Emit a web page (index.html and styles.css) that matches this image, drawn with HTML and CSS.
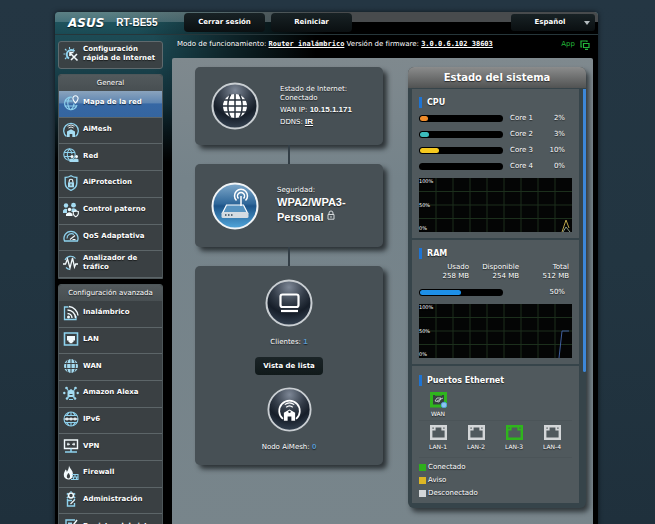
FILE: index.html
```html
<!DOCTYPE html>
<html lang="es">
<head>
<meta charset="utf-8">
<meta name="viewport" content="width=device-width, initial-scale=1">
<title>ASUS RT-BE55 - Mapa de la red</title>
<link rel="stylesheet" href="styles.css">
</head>
<body>
<div class="shell">
  <header class="topbar">
    <div class="brand"><span class="logo">ASUS</span><span class="model">RT-BE55</span></div>
    <button class="top-btn" type="button">Cerrar sesión</button>
    <button class="top-btn" type="button">Reiniciar</button>
    <div class="lang">
      <select class="lang-select" aria-label="Idioma"><option>Español</option><option>English</option></select>
    </div>
  </header>

  <div class="body">
    <nav class="nav" aria-label="Menú principal">
      <a class="quick item" href="#">
        <svg class="ico" viewBox="0 0 16 16"><path d="M11.5 5.2A4.6 4.6 0 1 0 6 12.5" stroke-width="2"/><path d="M6.5 1v2M2 3l1.500 1.500M.5 8h2M2 13l1.500-1.500M11 2.500l-1 1.500"/><path class="w" d="M7 7l7.500 7.500M8 14l6-6M7 10V6.500h3.500" stroke-width="1.600"/></svg>
        <span>Configuración<br>rápida de Internet</span>
      </a>

      <section class="group">
        <h2 class="group-title">General</h2>
        <div class="list list-general">
          <a class="item active" href="#"><svg class="ico" viewBox="0 0 16 16"><path d="M9 2.200A6.300 6.300 0 1 0 14 10M1.500 6h8M1.500 11h11.500M7 2c-3 3.500-3 9 0 12.500M8 14.500c2-1.500 3-4 3-6"/><path class="w" d="M12.500.8a2.600 2.600 0 0 1 2.600 2.700c0 1.800-2.600 4.500-2.600 4.500S9.900 5.300 9.900 3.500A2.600 2.600 0 0 1 12.500.8z"/></svg><span>Mapa de la red</span></a>
          <a class="item" href="#"><svg class="ico" viewBox="0 0 16 16"><path d="M3.500 14.500a7.300 7.300 0 1 1 9 0" stroke-width="1.300"/><path class="f" d="M4 9.500l4-2.200 4 2.200V15H9.300v-3H6.700v3H4z"/><path class="w" d="M5.500 6a4 4 0 0 1 5 0M4.500 4.200a6 6 0 0 1 7 0" stroke-width=".9"/></svg><span>AiMesh</span></a>
          <a class="item" href="#"><svg class="ico" viewBox="0 0 16 16"><circle cx="6.500" cy="6.500" r="5.700"/><path d="M1 4.500h11M1 8.500h8M6.500.8c-3 3-3 8.500 0 11.400M6.500.8c2 2 2.500 4 2.500 5.500"/><circle class="wf" cx="9" cy="8.500" r="1.500"/><circle class="wf" cx="13.500" cy="8.500" r="1.500"/><path class="f" d="M6.500 14v-2.500q2.500-2 4 0 2.500-2 5 0V14z"/></svg><span>Red</span></a>
          <a class="item" href="#"><svg class="ico" viewBox="0 0 16 16"><path d="M8 .8c2 1.400 4 1.700 5.800 1.700V8c0 3.500-2.500 6-5.800 7.300C4.700 14 2.200 11.500 2.200 8V2.500C4 2.500 6 2.200 8 .8z" stroke-width="1.400"/><path class="w" d="M6.200 7.500V6a1.800 1.800 0 0 1 3.600 0v1.500"/><path class="f" d="M5 7.300h6v5H5z"/><path d="M8 8.800v2" stroke="#3a4043"/></svg><span>AiProtection</span></a>
          <a class="item" href="#"><svg class="ico" viewBox="0 0 16 16"><circle class="f" cx="3" cy="3.500" r="2.200"/><circle class="f" cx="10.500" cy="3.200" r="2.400"/><circle class="wf" cx="6.500" cy="7.500" r="1.700"/><path class="f" d="M0 11V8.500Q1.500 6 4 7v4zM8.500 10V6.800q3-1.500 5 1V10z"/><path class="wf" d="M3 14v-2q3.500-3.500 6.500 0v2z"/><path class="w" d="M10.300 9.500q1.500 0 2.500-.9 1 .9 2.500.9v2.300q-.5 2-2.500 3-2-1-2.500-3z"/></svg><span>Control paterno</span></a>
          <a class="item" href="#"><svg class="ico" viewBox="0 0 16 16"><path d="M1.500 13a7 7 0 1 1 13 0z" stroke-width="1.300"/><path d="M4 10.500a4.500 4.500 0 0 1 7-4"/><path class="w" d="M7 11.500l5-4M9.500 11.500h3"/></svg><span>QoS Adaptativa</span></a>
          <a class="item" href="#"><svg class="ico" viewBox="0 0 16 16"><path d="M2 5a6.300 6.300 0 0 1 10.500-1.500M3 12.500a6.500 6.500 0 0 0 4 2"/><path class="w" d="M0 9h2.500L4.500 4l2.500 9L9.500 3l2 9 1.200-3H15" stroke-width="1.300"/></svg><span>Analizador de<br>tráfico</span></a>
        </div>
      </section>

      <section class="group">
        <h2 class="group-title">Configuración avanzada</h2>
        <div class="list list-advanced">
          <a class="item" href="#"><svg class="ico" viewBox="0 0 16 16"><path d="M5.500 2H1.500v12.500H13V11" stroke-width="1.300"/><path class="w" d="M4.500 8.500a4.500 4.500 0 0 1 4.500 4.500M4.500 5a8 8 0 0 1 8 8M6 1.500a10 10 0 0 1 9 9" stroke-width="1.400"/><circle class="wf" cx="5.500" cy="12" r="1.500"/></svg><span>Inalámbrico</span></a>
          <a class="item" href="#"><svg class="ico" viewBox="0 0 16 16"><path d="M1.500 2h13v12h-13z" stroke-width="1.600"/><path class="wf" d="M4 5h8v4.500h-1.500V11h-1v1.200h-3V11h-1V9.500H4z"/></svg><span>LAN</span></a>
          <a class="item" href="#"><svg class="ico" viewBox="0 0 16 16"><circle class="f" cx="8" cy="8" r="7"/><path class="k" d="M1 5.500h14M1 10.500h14M8 1v14M5.500 1c-2.500 4-2.500 10 0 14M10.500 1c2.500 4 2.500 10 0 14"/></svg><span>WAN</span></a>
          <a class="item" href="#"><svg class="ico" viewBox="0 0 16 16"><path class="f" d="M4.500 6.500L8 4l3.500 2.500V12h-7z"/><path class="k" d="M6.500 9.500h3"/><g class="f"><circle cx="1.300" cy="8" r="1.200"/><circle cx="14.700" cy="8" r="1.200"/><circle cx="3.500" cy="3" r="1.300"/><circle cx="12.500" cy="3" r="1.300"/><circle cx="4" cy="13.500" r="1.300"/><circle cx="12" cy="13.500" r="1.300"/></g><path d="M3.500 3l2 3M12.500 3l-2 3M4 13.500l2-2M12 13.500l-2-2M6 14.500h4"/></svg><span>Amazon Alexa</span></a>
          <a class="item" href="#"><svg class="ico" viewBox="0 0 16 16"><circle cx="8" cy="8" r="7"/><path d="M2 4.500h12M2 11.500h12M6 1.500q-2 2-2 3M10 1.500q2 2 2 3M4 11.500q1 2 2 3M12 11.500q-1 2-2 3M8 1v3.500M8 11.500V15"/><path class="w" d="M1.500 8h13M4 6.500v3M8 6.500v3M12 6.500v3" stroke-width="1.300"/></svg><span>IPv6</span></a>
          <a class="item" href="#"><svg class="ico" viewBox="0 0 16 16"><path class="w" d="M1.500 2h13v8.500h-13z" stroke-width="1.400"/><path class="w" d="M4 6.200h3M9 6.200h3M5 4.800v2.800M11 4.800v2.800"/><path d="M8 10.500v3M2 14h12" stroke-width="1.500"/></svg><span>VPN</span></a>
          <a class="item" href="#"><svg class="ico" viewBox="0 0 16 16"><path class="wf" d="M6 .5c.5 3 4 4.500 4 9 0 3-2 5-4.800 5S.8 12.500.8 9.800C.8 7.500 2 6.500 2.500 4.500c1 .5 1.300 1.500 1.300 2.500C5.200 5 6 3 6 .5z"/><path fill="#3a4043" stroke="none" d="M5.500 8c2 2 2 5 0 5.500-2.500-.5-2-3.500 0-5.500z"/><path d="M9 9.500h6v5H8M9 12h6M12 9.500V12M10.500 12v2.500M13.500 12v2.500"/></svg><span>Firewall</span></a>
          <a class="item" href="#"><svg class="ico" viewBox="0 0 16 16"><circle class="w" cx="8" cy="4.500" r="2.500" stroke-width="1.600"/><path d="M8 .2v1.500M3.800 2.500l1.400.8M3.800 6.800l1.400-.8M12.200 2.500l-1.400.8M12.200 6.800l-1.400-.8" stroke-width="1.500"/><path d="M9 9.500H4.500v5.500h7V12M5 9l-1-1M11 9l1-1" stroke-width="1.400"/><path class="w" d="M7.500 13l4-4"/></svg><span>Administración</span></a>
          <a class="item" href="#"><svg class="ico" viewBox="0 0 16 16"><path d="M12 2H3v12.500h10V8" stroke-width="1.400"/><path class="f" d="M5 4.500h4v7H5z"/><path class="w" d="M8 10l6-8" stroke-width="1.500"/></svg><span>Registro del sistema</span></a>
        </div>
      </section>
    </nav>

    <div class="page">
      <div class="info">
        <span>Modo de funcionamiento: <a class="mono" href="#">Router inalámbrico</a> Versión de firmware: <a class="mono" href="#">3.0.0.6.102_38603</a></span>
        <a class="app" href="#">App <svg class="app-ico" viewBox="0 0 10 10"><path d="M2 7H1V1h6v1M3.500 3.500h5.500v4H3.500zM5 9.300h3"/></svg></a>
      </div>

      <main class="content">
        <div class="map">
          <section class="card card-net">
            <svg class="round" viewBox="0 0 48 48">
              <defs>
                <radialGradient id="dark" cx=".5" cy=".15" r=".9"><stop offset="0" stop-color="#7d8796"/><stop offset=".4" stop-color="#343d49"/><stop offset=".65" stop-color="#161e29"/><stop offset="1" stop-color="#3a4858"/></radialGradient>
                <linearGradient id="blue" x1="0" y1="0" x2="0" y2="1"><stop offset="0" stop-color="#7fa9cb"/><stop offset=".45" stop-color="#2f6799"/><stop offset=".5" stop-color="#1d5488"/><stop offset="1" stop-color="#52a7dc"/></linearGradient>
              </defs>
              <circle cx="24" cy="24" r="22.500" fill="url(#dark)" stroke="#c9ced2" stroke-width="2"/>
              <circle cx="24" cy="24" r="12" fill="#fff"/>
              <path d="M13 18h22M12 24h24M13 30h22M24 12v24M19.500 12.500c-3.500 6-3.500 17 0 23M28.500 12.500c3.500 6 3.500 17 0 23" fill="none" stroke="#29323d" stroke-width="1.500"/>
            </svg>
            <div class="net-text">
              <div>Estado de Internet:<br>Conectado</div>
              <div>WAN IP: <b class="arial">10.15.1.171</b></div>
              <div>DDNS: <a class="arial ddns" href="#">IR</a></div>
            </div>
          </section>
          <div class="link"></div>
          <section class="card card-sec">
            <svg class="round" viewBox="0 0 48 48">
              <circle cx="24" cy="24" r="22.500" fill="url(#blue)" stroke="#f1f4f6" stroke-width="2"/>
              <path d="M15.500 23h17l4 8h-25z" fill="#5793c0" stroke="#fff" stroke-width="1.200"/>
              <rect x="10.500" y="30" width="27" height="6" rx="1.500" fill="#d5dce2"/>
              <path d="M14 33h1.500M17 33h1.500M20 33h1.500" stroke="#34485a" stroke-width="1.500"/>
              <path d="M30 24V14M27.500 16.500a3.500 3.500 0 1 1 5 0M25.500 18.500a6.500 6.500 0 1 1 9 0" fill="none" stroke="#fff" stroke-width="1.500"/>
            </svg>
            <div class="sec-text">
              <div>Seguridad:</div>
              <div class="sec-value">WPA2/WPA3-<br>Personal <svg class="lock" viewBox="0 0 8 10"><path d="M2 4.500V3a2 2 0 0 1 4 0v1.500M1 4.500h6v4.700H1zM4 6v1.800" fill="none" stroke="#d5d9dc"/></svg></div>
            </div>
          </section>
          <div class="link"></div>
          <section class="card card-clients">
            <svg class="round" viewBox="0 0 48 48">
              <circle cx="24" cy="24" r="22.500" fill="url(#dark)" stroke="#c9ced2" stroke-width="2"/>
              <rect x="15.500" y="15.500" width="18" height="12.500" rx="2" fill="none" stroke="#fff" stroke-width="2.200"/>
              <path d="M16 32h17" stroke="#fff" stroke-width="2.200"/>
            </svg>
            <p class="count">Clientes: <b class="num">1</b></p>
            <button class="list-btn" type="button">Vista de lista</button>
            <svg class="round round-small" viewBox="0 0 48 48">
              <circle cx="24" cy="24" r="22.500" fill="url(#dark)" stroke="#c9ced2" stroke-width="2"/>
              <path d="M17 34a11 11 0 1 1 14 0" fill="none" stroke="#fff" stroke-width="1.800"/>
              <path d="M18 27.500l6-3.500 6 3.500V36h-4v-4.500h-4V36h-4z" fill="#fff"/>
              <path d="M20.500 21.500a5.500 5.500 0 0 1 7 0M19 18.800a8.500 8.500 0 0 1 10 0" fill="none" stroke="#fff" stroke-width="1.300"/>
              <circle cx="24" cy="26.500" r="1.300" fill="#29323d"/>
            </svg>
            <p class="count">Nodo AiMesh: <b class="num">0</b></p>
          </section>
        </div>

        <aside class="status">
          <h1 class="status-title">Estado del sistema</h1>
          <div class="status-body">
            <div class="panels">
              <section class="panel">
                <h3 class="panel-title">CPU</h3>
                <div class="row"><div class="bar"><div class="fill orange" style="width:10%"></div></div><span>Core 1</span><span class="pct">2%</span></div>
                <div class="row"><div class="bar"><div class="fill teal" style="width:11%"></div></div><span>Core 2</span><span class="pct">3%</span></div>
                <div class="row"><div class="bar"><div class="fill yellow" style="width:23%"></div></div><span>Core 3</span><span class="pct">10%</span></div>
                <div class="row"><div class="bar"></div><span>Core 4</span><span class="pct">0%</span></div>
                <div class="chart">
                  <svg class="plot" viewBox="0 0 153 54" preserveAspectRatio="none"><path class="grid-line" d="M17 0v54M34 0v54M51 0v54M68 0v54M85 0v54M102 0v54M119 0v54M136 0v54M0 13.500h153M0 27h153M0 40.500h153"/><path d="M143 54l4-12 3 8" stroke="#b9a24a"/><path d="M144 54l3-5 4 5" stroke="#8a9a86"/></svg>
                  <div class="labels"><span>100%</span><span>50%</span><span>0%</span></div>
                </div>
              </section>
              <section class="panel">
                <h3 class="panel-title">RAM</h3>
                <dl class="mem">
                  <div><dt>Usado</dt><dd>258 MB</dd></div>
                  <div><dt>Disponible</dt><dd>254 MB</dd></div>
                  <div><dt>Total</dt><dd>512 MB</dd></div>
                </dl>
                <div class="row row-ram"><div class="bar"><div class="fill blue" style="width:50%"></div></div><span></span><span class="pct">50%</span></div>
                <div class="chart">
                  <svg class="plot" viewBox="0 0 153 54" preserveAspectRatio="none"><path class="grid-line" d="M17 0v54M34 0v54M51 0v54M68 0v54M85 0v54M102 0v54M119 0v54M136 0v54M0 13.500h153M0 27h153M0 40.500h153"/><path d="M140 54l3-27h7" stroke="#3f5f9e"/></svg>
                  <div class="labels"><span>100%</span><span>50%</span><span>0%</span></div>
                </div>
              </section>
              <section class="panel panel-ports">
                <h3 class="panel-title">Puertos Ethernet</h3>
                <div class="ports ports-wan">
                  <div class="port on"><svg class="port-ico" viewBox="0 0 17 16"><path d="M1.500 1.500h14v12.500h-14z" stroke-width="3" fill="#35423e"/><path d="M5 3h7" stroke-width="1.500"/><path d="M5 9l2-3h4l-2 4zM7 9l6-3" stroke="#d8dddf" stroke-width=".8"/><circle cx="14" cy="13" r="2.800" fill="#8bc4f2" stroke="#4f9be0" stroke-width=".8"/></svg><span>WAN</span></div>
                </div>
                <div class="ports">
                  <div class="port"><svg class="port-ico" viewBox="0 0 17 16"><path d="M1.200 1.200h14.600v12.600H1.200z" stroke-width="2.400"/><path d="M2 4.700h2.700V2M15 4.700h-2.700V2" stroke-width="1.800"/></svg><span>LAN-1</span></div>
                  <div class="port"><svg class="port-ico" viewBox="0 0 17 16"><path d="M1.200 1.200h14.600v12.600H1.200z" stroke-width="2.400"/><path d="M2 4.700h2.700V2M15 4.700h-2.700V2" stroke-width="1.800"/></svg><span>LAN-2</span></div>
                  <div class="port on"><svg class="port-ico" viewBox="0 0 17 16"><path d="M1.200 1.200h14.600v12.600H1.200z" stroke-width="2.400"/><path d="M2 4.700h2.700V2M15 4.700h-2.700V2" stroke-width="1.800"/></svg><span>LAN-3</span></div>
                  <div class="port"><svg class="port-ico" viewBox="0 0 17 16"><path d="M1.200 1.200h14.600v12.600H1.200z" stroke-width="2.400"/><path d="M2 4.700h2.700V2M15 4.700h-2.700V2" stroke-width="1.800"/></svg><span>LAN-4</span></div>
                </div>
                <ul class="legend">
                  <li><i class="dot green"></i>Conectado</li>
                  <li><i class="dot amber"></i>Aviso</li>
                  <li><i class="dot gray"></i>Desconectado</li>
                </ul>
              </section>
            </div>
            <div class="scroll"><div class="thumb"></div></div>
          </div>
        </aside>
      </main>
    </div>
  </div>
</div>
</body>
</html>
```

FILE: styles.css
```css
* { box-sizing: border-box; }

body {
  margin: 0;
  height: 100vh;
  overflow: hidden;
  padding: 12px 57px 0 55px;
  background: linear-gradient(#243643 0, #223541 50%, #1f303c 100%);
  color: #fff;
  font: 7px/9px "DejaVu Sans", Verdana, sans-serif;
  text-shadow: 0 1px 1px rgba(0, 0, 0, .6);
}

a { color: inherit; text-decoration: none; }
h1, h2, h3, p, dl, dd, ul { margin: 0; padding: 0; }
button, select { font: inherit; color: inherit; text-shadow: inherit; border: 0; margin: 0; padding: 0; }

.shell {
  border-radius: 4px 4px 0 0;
  background:
    linear-gradient(90deg, rgba(0, 0, 0, 0) 18%, rgba(0, 0, 0, .5) 32%, #000 48%) 0 22px / 100% 100% no-repeat,
    linear-gradient(#1f515b 0, #1a444e 50px, #123039 90px, #08161b 120px, #000 150px);
  box-shadow: 0 0 5px rgba(0, 0, 0, .6);
  min-height: 100%;
}

/* Top bar */
.topbar {
  display: flex;
  align-items: center;
  height: 23px;
  padding: 0 3px 1px 13px;
  border-bottom: 1px solid #26363a;
  border-radius: 4px 4px 0 0;
  background:
    linear-gradient(90deg, rgba(0, 0, 0, 0) 15%, #000 50%) 0 10px / 100% 12px no-repeat,
    linear-gradient(90deg, rgba(80, 86, 88, 0) 10%, #484b4d 50%) 0 0 / 100% 10px no-repeat,
    linear-gradient(#5d8084 0, #45717a 10px, #1f535d 10px, #1a4a54 100%);
}
.brand { display: flex; align-items: center; gap: 12px; width: 116px; }
.logo { font: italic bold 12px/12px "DejaVu Sans", sans-serif; }
.model { font: bold 10px/12px "Liberation Sans", Arial, sans-serif; }
.top-btn {
  width: 81px;
  height: 19px;
  margin-right: 6px;
  border-radius: 4px;
  background: linear-gradient(#182225, #0a0f11);
  font-weight: bold;
  cursor: pointer;
}
.lang { position: relative; margin-left: auto; }
.lang::after {
  content: "";
  position: absolute;
  right: 5px;
  top: 7px;
  border: 3px solid transparent;
  border-top: 4px solid #b5bcbf;
  border-bottom: 0;
  pointer-events: none;
}
.lang-select {
  appearance: none;
  width: 84px;
  height: 17px;
  padding-right: 6px;
  border-radius: 3px;
  background: linear-gradient(#182225, #0a0f11);
  font-weight: bold;
  text-align-last: center;
}

/* Side navigation */
.body { display: flex; gap: 9px; padding: 0 5px 0 3px; }
.nav { flex: none; width: 105px; padding-top: 6px; font-weight: bold; }
.item {
  display: flex;
  align-items: center;
  gap: 4px;
  padding: 0 0 2px 4px;
  border-bottom: 1px solid #5c6568;
  white-space: nowrap;
  overflow: hidden;
}
.quick {
  height: 28px;
  border: 1px solid #5f6a6e;
  border-radius: 3px;
  background: #3a4144;
}
.group { margin-top: 5px; border: 1px solid #4d5659; border-radius: 3px 3px 0 0; background: #3a4043; }
.group-title {
  height: 16px;
  padding-top: 4px;
  background: linear-gradient(#52595c, #484f52);
  border-radius: 3px 3px 0 0;
  font-size: 7px;
  line-height: 9px;
  font-weight: normal;
  text-align: center;
}
.list { display: grid; grid-auto-rows: 1fr; }
.list-general { height: 187px; }
.list-advanced { height: 240px; }
.active { background: linear-gradient(#8aa3bd 0, #5f86b2 45%, #3667a4 50%, #35659f 100%); }

.ico { flex: none; width: 16px; height: 16px; fill: none; stroke: #8ed2ee; stroke-width: 1.1; }
.ico .w { stroke: #f2fafd; }
.ico .f { fill: #a5dcf2; stroke: none; }
.ico .wf { fill: #f2fafd; stroke: none; }
.ico .k { stroke: #3a4043; stroke-width: 1; }

/* Page */
.page { flex: 1; min-width: 0; display: flex; flex-direction: column; }
.info {
  display: flex;
  justify-content: space-between;
  align-items: center;
  height: 23px;
  padding: 0 3px 4px 5px;
  white-space: nowrap;
}
.mono { font: bold 7px/9px "DejaVu Sans Mono", monospace; text-decoration: underline; }
.app { display: flex; gap: 5px; align-items: center; color: #22b83a; }
.app-ico { width: 10px; height: 10px; fill: none; stroke: #22b83a; stroke-width: 1.2; }

.content {
  flex: 1;
  display: grid;
  grid-template-columns: minmax(0, 188fr) minmax(0, 178fr);
  align-items: start;
  gap: 25px;
  padding: 9px 7px 0 23px;
  background: linear-gradient(#7f898e 0, #75838a 25%, #78858b 100%);
  border-radius: 2px 2px 0 0;
}

/* Network map */
.card {
  display: flex;
  border-radius: 5px;
  background: #475055;
  box-shadow: 4px 4px 5px rgba(20, 24, 27, .75);
}
.card-net, .card-sec { align-items: center; padding-left: 16px; }
.card-net { height: 78px; gap: 21px; }
.card-sec { height: 83px; gap: 18px; }
.link { width: 2px; height: 19px; margin: 0 auto; background: #333e46; }
.round { flex: none; width: 48px; height: 48px; }
.round-small { width: 45px; height: 45px; }
.net-text { display: grid; gap: 2px; }
.arial { font: bold 8px/9px "Liberation Sans", Arial, sans-serif; }
.ddns { text-decoration: underline; }
.sec-value { font: bold 11px/15px "Liberation Sans", Arial, sans-serif; }
.lock { width: 8px; height: 10px; vertical-align: 1px; }
.card-clients { flex-direction: column; align-items: center; height: 199px; padding-top: 13px; }
.count { margin: 10px 0; }
.num { color: #5b9bd0; font: bold 8px/9px "Liberation Sans", Arial, sans-serif; }
.list-btn {
  width: 68px;
  height: 18px;
  margin: 0 0 12px;
  border-radius: 4px;
  background: linear-gradient(#1b2427, #10191a);
  font-weight: bold;
  cursor: pointer;
}

/* System status */
.status { border-radius: 6px; background: #36444a; box-shadow: 3px 4px 5px rgba(20, 24, 27, .7); }
.status-title {
  height: 21px;
  border-radius: 6px 6px 0 0;
  background: linear-gradient(#8b8c8c, #515353);
  font-size: 10px;
  line-height: 22px;
  text-align: center;
}
.status-body { display: flex; padding: 1px 0 5px 4px; }
.panels { flex: 1; min-width: 0; display: grid; gap: 2px; }
.panel { padding: 8px 7px 6px; background: #50595d; }
.scroll { width: 3px; margin-left: 4px; }
.thumb { height: 283px; border-radius: 0 0 2px 2px; background: #3d87d8; }
.panel-title {
  height: 11px;
  padding-left: 5px;
  margin-bottom: 6px;
  border-left: 3px solid #1e74d4;
  font-size: 8px;
  line-height: 11px;
}
.row { display: grid; grid-template-columns: 84px 27px 1fr; align-items: center; gap: 7px; height: 9px; margin-bottom: 7px; padding-right: 7px; }
.pct { text-align: right; }
.bar { height: 7px; padding: 1px; border-radius: 4px; background: #000; overflow: hidden; }
.fill { height: 5px; border-radius: 3px; }
.orange { background: #f08c2a; }
.teal { background: #3cbcbc; }
.yellow { background: #f5c91f; }
.blue { background: #1e90e8; }
.chart { display: grid; height: 54px; background: #040505; }
.plot { grid-area: 1 / 1; width: 100%; height: 54px; fill: none; stroke-width: 1; }
.grid-line { stroke: #1c2f1c; }
.labels { grid-area: 1 / 1; display: flex; flex-direction: column; justify-content: space-between; font-size: 5px; line-height: 7px; }
.mem { display: grid; grid-template-columns: 50px 50px 50px; text-align: right; margin: -2px 0 7px; }
.panel-ports { padding-top: 9px; padding-bottom: 5px; }
.ports { display: grid; grid-template-columns: repeat(4, 38px); padding: 4px 0 6px; border-top: 1px solid #4b5458; }
.ports-wan { border-top: 0; padding: 0 0 2px; }
.port { display: grid; justify-items: center; gap: 2px; font-size: 6px; line-height: 8px; }
.port-ico { width: 17px; height: 16px; fill: none; stroke: #d3d6d8; }
.port.on .port-ico { stroke: #2fb51d; }
.legend { list-style: none; display: grid; gap: 4px; padding-top: 5px; border-top: 1px solid #4b5458; }
.legend li { display: flex; align-items: center; gap: 2px; }
.dot { width: 7px; height: 7px; }
.green { background: #2fae1c; }
.amber { background: #dcb625; }
.gray { background: #d3d6d8; }
```
